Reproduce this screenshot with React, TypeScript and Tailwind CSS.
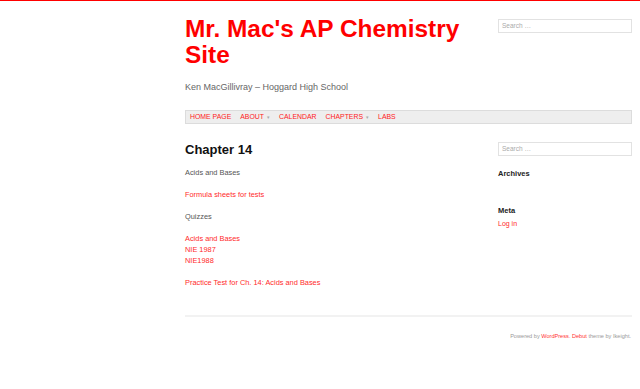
import React from 'react';

const NAV = [
  { label: 'HOME PAGE', sub: false },
  { label: 'ABOUT', sub: true },
  { label: 'CALENDAR', sub: false },
  { label: 'CHAPTERS', sub: true },
  { label: 'LABS', sub: false },
];

function SearchBox() {
  return (
    <div className="h-[14px] w-full border border-[#e2e2e2] bg-white flex items-center px-[3px]">
      <span className="text-[6.5px] leading-none text-[#aaa]">Search …</span>
    </div>
  );
}

export default function App() {
  return (
    <div className="min-h-[389px] bg-white" style={{ fontFamily: '"Liberation Sans", Arial, sans-serif' }}>
      <div className="h-[1px] bg-[#ff0000]" />

      <div className="pl-[185px] pr-[8px]">
        {/* Header */}
        <div className="flex gap-[8px]">
          <div className="w-[305px]">
            <h1 className="mt-[15px] text-[24.4px] leading-[26px] font-bold text-[#ff0000]">
              Mr. Mac's AP Chemistry Site
            </h1>
            <p className="mt-[13px] text-[9px] leading-[12px] text-[#666]">
              Ken MacGillivray – Hoggard High School
            </p>
          </div>
          <div className="w-[134px] pt-[18px]">
            <SearchBox />
          </div>
        </div>

        {/* Nav */}
        <nav className="mt-[17px] h-[14px] border border-[#dcdcdc] bg-[#eeeeee] flex items-center gap-[9px] pl-[4px]">
          {NAV.map(n => (
            <span key={n.label} className="flex items-center text-[6.9px] leading-none text-[#ff1a1a]">
              {n.label}
              {n.sub && <span className="ml-[3px] text-[5px] text-[#aaa]">▾</span>}
            </span>
          ))}
        </nav>

        {/* Content */}
        <div className="flex gap-[8px]">
          <main className="w-[305px]">
            <h2 className="mt-[18px] text-[13px] leading-[16px] font-bold text-[#111]">Chapter 14</h2>
            <div className="mt-[9px] text-[7.4px] leading-[11px] text-[#555] space-y-[11px]">
              <p>Acids and Bases</p>
              <p className="text-[#ff2a2a]">Formula sheets for tests</p>
              <p>Quizzes</p>
              <p className="text-[#ff2a2a]">
                Acids and Bases<br />NIE 1987<br />NIE1988
              </p>
              <p className="text-[#ff2a2a]">Practice Test for Ch. 14: Acids and Bases</p>
            </div>
          </main>

          <aside className="w-[134px] pt-[18px]">
            <SearchBox />
            <h3 className="mt-[13px] text-[7.5px] leading-[10px] font-semibold text-[#222]">Archives</h3>
            <h3 className="mt-[27px] text-[7.5px] leading-[10px] font-semibold text-[#222]">Meta</h3>
            <p className="mt-[3px] text-[7px] leading-[10px] text-[#ff2a2a]">Log in</p>
          </aside>
        </div>

        {/* Footer */}
        <footer className="mt-[27px]">
          <div className="h-[2px] bg-[#f2f2f2]" />
          <p className="mt-[15px] text-right text-[5.6px] leading-[8px] text-[#999] pr-[1px]">
            Powered by <span className="text-[#ff3333]">WordPress</span>. <span className="text-[#ff3333]">Debut</span> theme by Ikeight.
          </p>
        </footer>
      </div>
    </div>
  );
}
